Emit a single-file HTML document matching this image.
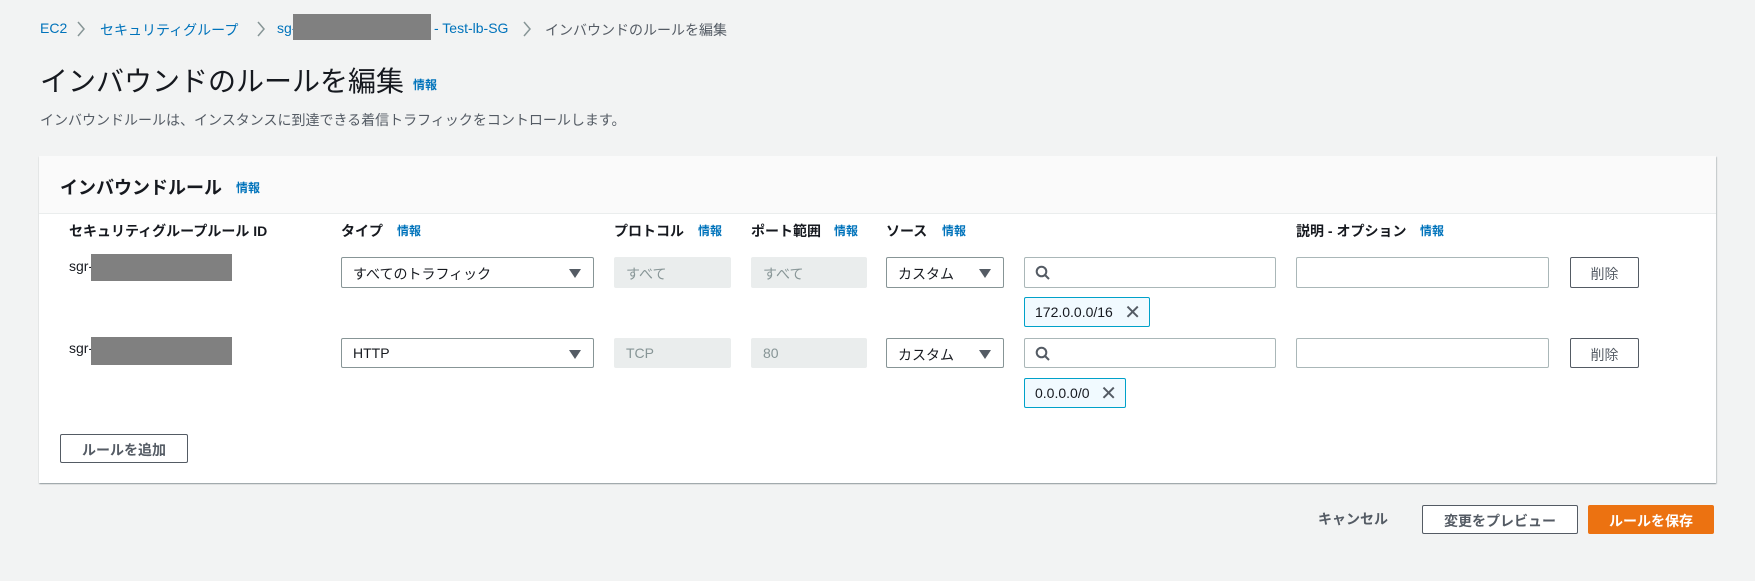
<!DOCTYPE html>
<html><head><meta charset="utf-8"><style>
*{box-sizing:border-box;margin:0;padding:0}
body{width:1755px;height:581px;background:#f2f3f3;font-family:"Liberation Sans","Noto Sans CJK JP",sans-serif;font-size:14px;color:#16191f;position:relative;overflow:hidden}
.a{position:absolute;white-space:nowrap}
.link{color:#0073bb}
.info{color:#0073bb;font-size:12px;font-weight:bold}
.gray{background:#808080}
.box{position:absolute;border:1px solid #aab7b8;background:#fff;border-radius:2px}
.dis{position:absolute;background:#eaeded;border-radius:2px;color:#879596;padding:7px 12px}
.tri{position:absolute;right:12px;top:11px;width:0;height:0;border-left:6px solid transparent;border-right:6px solid transparent;border-top:9px solid #545b64}
.btn{position:absolute;border:1px solid #545b64;background:#fff;border-radius:2px;font-weight:bold;color:#545b64;text-align:center}
.tok{position:absolute;border:1px solid #00a1c9;background:#f1faff;border-radius:2px;padding:6px 10px;font-size:14px}
.hd{font-weight:bold;font-size:14px}
.chev{position:absolute;top:21px}
</style></head><body>
<div class="a link" style="left:40px;top:20px">EC2</div>
<svg class="chev" style="left:76px" width="10" height="16" viewBox="0 0 10 16"><path d="M2 1l6 7-6 7" fill="none" stroke="#879596" stroke-width="1.5"/></svg>
<div class="a link" style="left:100px;top:20px">セキュリティグループ</div>
<svg class="chev" style="left:256px" width="10" height="16" viewBox="0 0 10 16"><path d="M2 1l6 7-6 7" fill="none" stroke="#879596" stroke-width="1.5"/></svg>
<div class="a link" style="left:277px;top:20px">sg-</div>
<div class="a gray" style="left:293px;top:14px;width:138px;height:26px"></div>
<div class="a link" style="left:434px;top:20px">- Test-lb-SG</div>
<svg class="chev" style="left:522px" width="10" height="16" viewBox="0 0 10 16"><path d="M2 1l6 7-6 7" fill="none" stroke="#879596" stroke-width="1.5"/></svg>
<div class="a" style="left:545px;top:20px;color:#545b64">インバウンドのルールを編集</div>

<div class="a" style="left:40px;top:60px;font-size:28px">インバウンドのルールを編集</div>
<div class="a info" style="left:413px;top:76px">情報</div>
<div class="a" style="left:40px;top:110px;color:#545b64">インバウンドルールは、インスタンスに到達できる着信トラフィックをコントロールします。</div>

<div class="a" style="left:39px;top:156px;width:1677px;height:327px;background:#fff;box-shadow:0 1px 1px rgba(0,28,36,.3),1px 1px 1px rgba(0,28,36,.15)">
<div style="height:58px;background:#fafafa;border-bottom:1px solid #eaeded"></div>
</div>
<div class="a" style="left:60px;top:174px;font-size:18px;font-weight:bold">インバウンドルール</div>
<div class="a info" style="left:236px;top:179px">情報</div>

<div class="a hd" style="left:69px;top:221px">セキュリティグループルール ID</div>
<div class="a hd" style="left:341px;top:221px">タイプ</div><div class="a info" style="left:397px;top:222px">情報</div>
<div class="a hd" style="left:614px;top:221px">プロトコル</div><div class="a info" style="left:698px;top:222px">情報</div>
<div class="a hd" style="left:751px;top:221px">ポート範囲</div><div class="a info" style="left:834px;top:222px">情報</div>
<div class="a hd" style="left:886px;top:221px">ソース</div><div class="a info" style="left:942px;top:222px">情報</div>
<div class="a hd" style="left:1296px;top:221px">説明 - オプション</div><div class="a info" style="left:1420px;top:222px">情報</div>

<!-- row1 -->
<div class="a" style="left:69px;top:258px">sgr-</div>
<div class="a gray" style="left:91px;top:254px;width:141px;height:27px"></div>
<div class="box" style="left:341px;top:257px;width:253px;height:31px;border-color:#879596;padding:6px 11px">すべてのトラフィック<div class="tri"></div></div>
<div class="dis" style="left:614px;top:257px;width:117px;height:31px">すべて</div>
<div class="dis" style="left:751px;top:257px;width:116px;height:31px">すべて</div>
<div class="box" style="left:886px;top:257px;width:118px;height:31px;border-color:#879596;padding:6px 11px">カスタム<div class="tri"></div></div>
<div class="box" style="left:1024px;top:257px;width:252px;height:31px">
<svg style="position:absolute;left:10px;top:7px" width="16" height="16" viewBox="0 0 16 16"><circle cx="6.5" cy="6.5" r="4.8" fill="none" stroke="#545b64" stroke-width="2"/><line x1="10" y1="10" x2="14" y2="14" stroke="#545b64" stroke-width="2"/></svg></div>
<div class="box" style="left:1296px;top:257px;width:253px;height:31px"></div>
<div class="btn" style="left:1570px;top:257px;width:69px;height:31px;padding-top:6px;font-weight:normal">削除</div>
<div class="tok" style="left:1024px;top:297px;width:126px;height:30px">172.0.0.0/16<span style="position:absolute;right:8px;top:2px;font-size:20px;color:#545b64">✕</span></div>

<!-- row2 -->
<div class="a" style="left:69px;top:340px">sgr-</div>
<div class="a gray" style="left:91px;top:337px;width:141px;height:28px"></div>
<div class="box" style="left:341px;top:338px;width:253px;height:30px;border-color:#879596;padding:6px 11px">HTTP<div class="tri"></div></div>
<div class="dis" style="left:614px;top:338px;width:117px;height:30px">TCP</div>
<div class="dis" style="left:751px;top:338px;width:116px;height:30px">80</div>
<div class="box" style="left:886px;top:338px;width:118px;height:30px;border-color:#879596;padding:6px 11px">カスタム<div class="tri"></div></div>
<div class="box" style="left:1024px;top:338px;width:252px;height:30px">
<svg style="position:absolute;left:10px;top:7px" width="16" height="16" viewBox="0 0 16 16"><circle cx="6.5" cy="6.5" r="4.8" fill="none" stroke="#545b64" stroke-width="2"/><line x1="10" y1="10" x2="14" y2="14" stroke="#545b64" stroke-width="2"/></svg></div>
<div class="box" style="left:1296px;top:338px;width:253px;height:30px"></div>
<div class="btn" style="left:1570px;top:338px;width:69px;height:30px;padding-top:6px;font-weight:normal">削除</div>
<div class="tok" style="left:1024px;top:378px;width:102px;height:30px">0.0.0.0/0<span style="position:absolute;right:8px;top:2px;font-size:20px;color:#545b64">✕</span></div>

<div class="btn" style="left:60px;top:434px;width:128px;height:29px;padding-top:5px">ルールを追加</div>

<div class="a" style="left:1318px;top:509px;font-weight:bold;color:#545b64">キャンセル</div>
<div class="btn" style="left:1422px;top:505px;width:156px;height:29px;padding-top:5px">変更をプレビュー</div>
<div class="a" style="left:1588px;top:505px;width:126px;height:29px;background:#ec7211;border-radius:2px;color:#fff;font-weight:bold;text-align:center;padding-top:6px">ルールを保存</div>
</body></html>
